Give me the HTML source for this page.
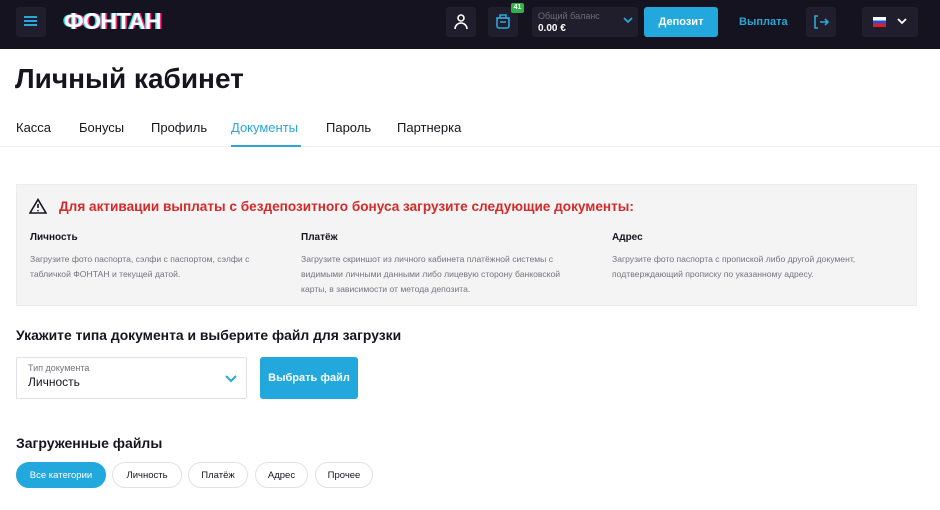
<!DOCTYPE html>
<html><head><meta charset="utf-8"><style>
*{margin:0;padding:0;box-sizing:border-box}
body{width:940px;height:510px;overflow:hidden;background:#fff;font-family:"Liberation Sans","DejaVu Sans",sans-serif;color:#16151f;position:relative}
.a{position:absolute}
.hdr{left:0;top:0;width:940px;height:49px;background:#15131f}
.ib{background:#201e2c;border-radius:3px}
.t{white-space:nowrap}
.pill{display:flex;align-items:center;justify-content:center;height:26px;border:1px solid #e2e2e6;border-radius:13px;font-size:9.5px;top:462px}
</style></head><body>
<div class="a hdr"></div>
<div class="a ib" style="left:16px;top:7px;width:30px;height:30px"></div>
<div class="a" style="left:24px;top:16px;width:13px;height:2px;background:#2aa7d8;box-shadow:0 4px 0 #2aa7d8,0 8px 0 #2aa7d8"></div>
<div class="a t" style="left:64px;top:8px;font:900 23px 'Liberation Sans',sans-serif;color:#fff;letter-spacing:-0.5px;text-shadow:-1.5px 0 #2ad4e8,1.5px 0 #ff2a7a">ФОНТАН</div>
<div class="a ib" style="left:446px;top:7px;width:30px;height:30px"></div>
<svg class="a" style="left:453px;top:13px" width="16" height="18" viewBox="0 0 16 18" fill="none" stroke="#fff" stroke-width="1.6"><circle cx="8" cy="5" r="3"/><path d="M2 16a6 6 0 0 1 12 0"/></svg>
<div class="a ib" style="left:488px;top:7px;width:30px;height:30px"></div>
<svg class="a" style="left:495px;top:13px" width="16" height="17" viewBox="0 0 16 17" fill="none" stroke="#2aa7d8" stroke-width="1.6"><rect x="2" y="5" width="12" height="10" rx="2"/><path d="M1 5h14M5 5V2h6v3M5 9h6"/></svg>
<div class="a t" style="left:511px;top:3px;width:13px;height:10px;background:#2fb34a;border-radius:2px;color:#fff;font:bold 7px 'Liberation Sans';text-align:center;line-height:10px">41</div>
<div class="a ib" style="left:532px;top:7px;width:106px;height:30px"></div>
<div class="a t" style="left:538px;top:11px;font-size:9px;color:#6d6b7a">Общий баланс</div>
<div class="a t" style="left:538px;top:23px;font:bold 10px 'Liberation Sans';color:#fff">0.00 €</div>
<svg class="a" style="left:623px;top:17px" width="10" height="7" viewBox="0 0 10 7" fill="none" stroke="#2aa7d8" stroke-width="1.8"><path d="M1 1l4 4 4-4"/></svg>
<div class="a t" style="left:644px;top:7px;width:74px;height:30px;background:#22a8dc;border-radius:3px;color:#fff;font:bold 11px 'Liberation Sans';text-align:center;line-height:30px">Депозит</div>
<div class="a t" style="left:739px;top:16px;color:#2aa7d8;font:bold 11px 'Liberation Sans'">Выплата</div>
<div class="a ib" style="left:806px;top:7px;width:30px;height:30px"></div>
<svg class="a" style="left:814px;top:15px" width="16" height="14" viewBox="0 0 16 14" fill="none" stroke="#2aa7d8" stroke-width="1.6"><path d="M4 1H1v12h3M6 7h8M11 4l3 3-3 3"/></svg>
<div class="a ib" style="left:862px;top:7px;width:56px;height:30px"></div>
<div class="a" style="left:873px;top:17px;width:13px;height:10px;background:linear-gradient(#fff 33%,#2a4fd0 33% 66%,#d8202a 66%)"></div>
<svg class="a" style="left:897px;top:18px" width="10" height="7" viewBox="0 0 10 7" fill="none" stroke="#fff" stroke-width="1.8"><path d="M1 1l4 4 4-4"/></svg>

<div class="a t" style="left:15px;top:63px;font:bold 28px 'Liberation Sans';color:#16151f">Личный кабинет</div>
<div class="a t" style="left:16px;top:120px;font-size:13px;color:#16151f">Касса</div>
<div class="a t" style="left:79px;top:120px;font-size:13px;color:#16151f">Бонусы</div>
<div class="a t" style="left:151px;top:120px;font-size:13px;color:#16151f">Профиль</div>
<div class="a t" style="left:231px;top:120px;font-size:13px;color:#2aa7d8">Документы</div>
<div class="a t" style="left:326px;top:120px;font-size:13px;color:#16151f">Пароль</div>
<div class="a t" style="left:397px;top:120px;font-size:13px;color:#16151f">Партнерка</div>
<div class="a" style="left:0;top:146px;width:940px;height:1px;background:#eeeef0"></div>
<div class="a" style="left:231px;top:145px;width:70px;height:2px;background:#2aa7d8"></div>

<div class="a" style="left:16px;top:184px;width:901px;height:122px;background:#f4f4f5;border:1px solid #ececee"></div>
<svg class="a" style="left:29px;top:198px" width="18" height="16" viewBox="0 0 18 16" fill="none" stroke="#16151f" stroke-width="1.6"><path d="M9 1.5L1 15h16z"/><path d="M9 6v4M9 12v1.2"/></svg>
<div class="a t" style="left:59px;top:199px;font:bold 13.6px 'Liberation Sans';color:#d42a2a">Для активации выплаты с бездепозитного бонуса загрузите следующие документы:</div>
<div class="a t" style="left:30px;top:232px;font:bold 10px 'Liberation Sans'">Личность</div>
<div class="a t" style="left:301px;top:232px;font:bold 10px 'Liberation Sans'">Платёж</div>
<div class="a t" style="left:612px;top:232px;font:bold 10px 'Liberation Sans'">Адрес</div>
<div class="a" style="left:30px;top:252px;width:248px;font-size:8.6px;line-height:15px;color:#75737e">Загрузите фото паспорта, сэлфи с паспортом, сэлфи с табличкой ФОНТАН и текущей датой.</div>
<div class="a" style="left:301px;top:252px;width:284px;font-size:8.6px;line-height:15px;color:#75737e">Загрузите скриншот из личного кабинета платёжной системы с видимыми личными данными либо лицевую сторону банковской карты, в зависимости от метода депозита.</div>
<div class="a" style="left:612px;top:252px;width:285px;font-size:8.6px;line-height:15px;color:#75737e">Загрузите фото паспорта с пропиской либо другой документ, подтверждающий прописку по указанному адресу.</div>

<div class="a t" style="left:16px;top:327px;font:bold 13.9px 'Liberation Sans'">Укажите типа документа и выберите файл для загрузки</div>
<div class="a" style="left:16px;top:357px;width:231px;height:42px;border:1px solid #e2e2e6;border-radius:2px"></div>
<div class="a t" style="left:28px;top:363px;font-size:9px;color:#75737e">Тип документа</div>
<div class="a t" style="left:28px;top:375px;font-size:12px">Личность</div>
<svg class="a" style="left:225px;top:375px" width="12" height="8" viewBox="0 0 12 8" fill="none" stroke="#2aa7d8" stroke-width="2"><path d="M1 1l5 5 5-5"/></svg>
<div class="a t" style="left:260px;top:357px;width:98px;height:42px;background:#22a8dc;border-radius:3px;color:#fff;font:bold 11px 'Liberation Sans';text-align:center;line-height:42px">Выбрать файл</div>

<div class="a t" style="left:16px;top:435px;font:bold 14px 'Liberation Sans'">Загруженные файлы</div>
<div class="a t pill" style="left:16px;width:90px;background:#22a8dc;border-color:#22a8dc;color:#fff">Все категории</div>
<div class="a t pill" style="left:112px;width:70px">Личность</div>
<div class="a t pill" style="left:188px;width:60px">Платёж</div>
<div class="a t pill" style="left:255px;width:53px">Адрес</div>
<div class="a t pill" style="left:315px;width:58px">Прочее</div>
</body></html>
